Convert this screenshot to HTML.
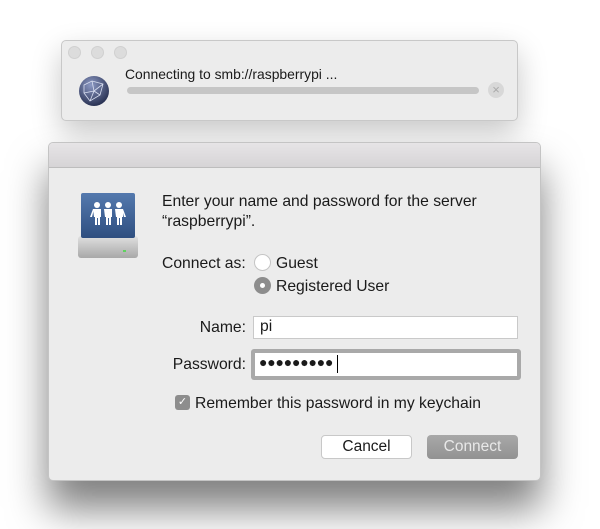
<!DOCTYPE html>
<html><head><style>
*{margin:0;padding:0;box-sizing:border-box}
body{width:600px;height:529px;background:#fff;position:relative;overflow:hidden;font-family:"Liberation Sans",sans-serif;color:#1a1a1a}
.abs{position:absolute}
.win1{left:61px;top:40px;width:457px;height:81px;background:#ececec;border:1px solid #c8c8c8;border-radius:5px;box-shadow:0 12px 30px rgba(0,0,0,.22)}
.dot{width:13px;height:13px;border-radius:50%;background:#dcdcdc;border:1px solid #d0d0d0;top:5px}
.dlg{left:48px;top:142px;width:493px;height:339px;background:#ececec;border:1px solid #c4c4c4;border-radius:5px;box-shadow:0 28px 40px rgba(0,0,0,.5);overflow:hidden}
.tb{left:0;top:0;width:100%;height:25px;background:linear-gradient(#e6e4e6,#d6d4d6);border-bottom:1px solid #bdbdbd}
.t{font-size:15.7px;white-space:nowrap}
.r{text-align:right;width:120px}
.field{background:#fff;border:1px solid #c9c9c9;height:23px}
.radio{width:17px;height:17px;border-radius:50%}
</style></head><body>
<div class="abs win1">
 <div class="abs dot" style="left:6px"></div>
 <div class="abs dot" style="left:29px"></div>
 <div class="abs dot" style="left:52px"></div>
 <svg class="abs" style="left:16px;top:34px" width="32" height="32" viewBox="0 0 32 32"><defs><radialGradient id="g" cx=".4" cy=".3" r=".8"><stop offset="0" stop-color="#8c99c4"/><stop offset="1" stop-color="#1c2444"/></radialGradient></defs><circle cx="16" cy="16" r="15" fill="url(#g)"/><g stroke="#d8def0" stroke-width=".8" fill="none"><path d="M6 10L14 6L25 9L22 20L12 26L6 18Z M14 6L16 16L25 9 M16 16L22 20 M16 16L6 18 M16 16L12 26"/></g></svg>
 <div class="abs t" style="left:63px;top:25px;font-size:13.9px">Connecting to smb://raspberrypi ...</div>
 <div class="abs" style="left:65px;top:46px;width:352px;height:7px;border-radius:4px;background:#c6c6c6"></div>
 <div class="abs" style="left:426px;top:41px;width:16px;height:16px;border-radius:50%;background:#d8d8d8;color:#aaa;font-size:13px;line-height:16px;text-align:center">×</div>
</div>
<div class="abs dlg">
 <div class="abs tb"></div>
 <svg class="abs" style="left:28px;top:50px" width="62" height="67" viewBox="0 0 62 67"><defs><linearGradient id="b" x1="0" y1="0" x2="0" y2="1"><stop offset="0" stop-color="#5479ae"/><stop offset="1" stop-color="#2f4f80"/></linearGradient><linearGradient id="s" x1="0" y1="0" x2="0" y2="1"><stop offset="0" stop-color="#e0e0e0"/><stop offset="1" stop-color="#a8a8a8"/></linearGradient></defs><rect x="1" y="43" width="60" height="22" rx="3" fill="url(#s)"/><rect x="4" y="0" width="54" height="45" rx="2" fill="url(#b)"/><rect x="46" y="57" width="3" height="2" fill="#5ed25e"/><g fill="#fff"><circle cx="20" cy="12" r="3"/><circle cx="31" cy="12" r="3"/><circle cx="42" cy="12" r="3"/><path d="M16 16h8v8h-1v8h-2v-7h-1v7h-2v-8h-1z M27 16h8v8h-1v8h-2v-7h-1v7h-2v-8h-1z M38 16h8v8h-1v8h-2v-7h-1v7h-2v-8h-1z"/><path d="M13 24l3-8h1l-2 8z M49 24l-3-8h-1l2 8z" /></g></svg>
 <div class="abs t" style="left:113px;top:50px">Enter your name and password for the server</div>
 <div class="abs t" style="left:113px;top:70px">“raspberrypi”.</div>
 <div class="abs t" style="left:113px;top:112px">Connect as:</div>
 <div class="abs radio" style="left:205px;top:111px;background:#fff;border:1px solid #c4c4c4"></div>
 <div class="abs t" style="left:227px;top:112px">Guest</div>
 <div class="abs radio" style="left:205px;top:134px;background:#8d8d8d"><div class="abs" style="left:6px;top:6px;width:5px;height:5px;border-radius:50%;background:#fff"></div></div>
 <div class="abs t" style="left:227px;top:135px">Registered User</div>
 <div class="abs t r" style="left:77px;top:176px">Name:</div>
 <div class="abs field" style="left:204px;top:173px;width:265px"></div>
 <div class="abs t" style="left:211px;top:175px">pi</div>
 <div class="abs" style="left:202px;top:206px;width:270px;height:31px;background:#a9a9a9;border-radius:3px"></div>
 <div class="abs field" style="left:206px;top:210px;width:262px;height:23px;border:none"></div>
 <div class="abs t r" style="left:77px;top:213px">Password:</div>
 <div class="abs" style="left:210px;top:211px;font-size:14px;letter-spacing:-.2px">●●●●●●●●●</div>
 <div class="abs" style="left:288px;top:212px;width:1px;height:18px;background:#000"></div>
 <div class="abs" style="left:126px;top:252px;width:15px;height:15px;border-radius:3px;background:#8d8d8d;color:#fff;font-size:11px;line-height:15px;text-align:center">✓</div>
 <div class="abs t" style="left:146px;top:252px">Remember this password in my keychain</div>
 <div class="abs" style="left:272px;top:292px;width:91px;height:24px;background:#fff;border:1px solid #c8c8c8;border-radius:4px;text-align:center;font-size:15.5px;line-height:22px">Cancel</div>
 <div class="abs" style="left:378px;top:292px;width:91px;height:24px;background:linear-gradient(#a8a8a8,#929292);border-radius:4px;text-align:center;font-size:15.5px;line-height:23px;color:#e8e8e8">Connect</div>
</div>
</body></html>
